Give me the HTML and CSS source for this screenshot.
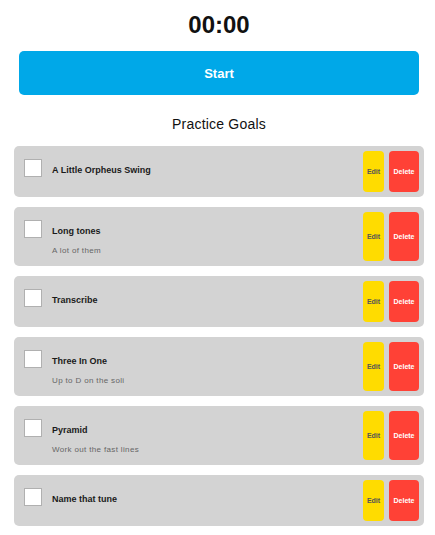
FILE: index.html
```html
<!DOCTYPE html>
<html>
<head>
<meta charset="utf-8">
<link rel="stylesheet" href="styles.css">
</head>
<body>
<main class="app">
  <h1 class="timer">00:00</h1>
  <button class="start">Start</button>
  <h2 class="section-title">Practice Goals</h2>
  <ul class="goals">
    <li class="goal">
      <div class="goal-main">
        <span class="check"></span>
        <div class="goal-text"><div class="goal-title">A Little Orpheus Swing</div></div>
      </div>
      <div class="actions"><span class="btn edit">Edit</span><span class="btn delete">Delete</span></div>
    </li>
    <li class="goal">
      <div class="goal-main">
        <span class="check"></span>
        <div class="goal-text"><div class="goal-title">Long tones</div><div class="goal-desc">A lot of them</div></div>
      </div>
      <div class="actions"><span class="btn edit">Edit</span><span class="btn delete">Delete</span></div>
    </li>
    <li class="goal">
      <div class="goal-main">
        <span class="check"></span>
        <div class="goal-text"><div class="goal-title">Transcribe</div></div>
      </div>
      <div class="actions"><span class="btn edit">Edit</span><span class="btn delete">Delete</span></div>
    </li>
    <li class="goal">
      <div class="goal-main">
        <span class="check"></span>
        <div class="goal-text"><div class="goal-title">Three In One</div><div class="goal-desc">Up to D on the soli</div></div>
      </div>
      <div class="actions"><span class="btn edit">Edit</span><span class="btn delete">Delete</span></div>
    </li>
    <li class="goal">
      <div class="goal-main">
        <span class="check"></span>
        <div class="goal-text"><div class="goal-title">Pyramid</div><div class="goal-desc">Work out the fast lines</div></div>
      </div>
      <div class="actions"><span class="btn edit">Edit</span><span class="btn delete">Delete</span></div>
    </li>
    <li class="goal">
      <div class="goal-main">
        <span class="check"></span>
        <div class="goal-text"><div class="goal-title">Name that tune</div></div>
      </div>
      <div class="actions"><span class="btn edit">Edit</span><span class="btn delete">Delete</span></div>
    </li>
  </ul>
</main>
</body>
</html>
```
FILE: styles.css
```css
* { box-sizing: border-box; }
body {
  margin: 0;
  background: #fff;
  font-family: "Liberation Sans", Arial, sans-serif;
  color: #111;
}
.app {
  width: 410px;
  margin-left: 14px;
  padding-top: 11px;
  display: flex;
  flex-direction: column;
}
.timer {
  margin: 0;
  font-size: 24px;
  line-height: 28px;
  font-weight: bold;
  text-align: center;
}
.start {
  margin: 12px 5px 0;
  height: 44px;
  border: none;
  border-radius: 5px;
  background: #00a8e8;
  color: #fff;
  font-family: "Liberation Sans", Arial, sans-serif;
  font-size: 13px;
  font-weight: bold;
}
.section-title {
  margin: 21px 0 0;
  font-size: 14px;
  line-height: 16px;
  font-weight: normal;
  letter-spacing: 0.2px;
  text-align: center;
}
.goals {
  list-style: none;
  margin: 14px 0 0;
  padding: 0;
  display: flex;
  flex-direction: column;
  gap: 10px;
}
.goal {
  display: flex;
  gap: 5px;
  padding: 5px;
  background: #d3d3d3;
  border-radius: 5px;
}
.goal-main {
  flex: 1;
  display: flex;
  align-items: flex-start;
  gap: 10px;
  padding-left: 5px;
}
.check {
  width: 18px;
  height: 18px;
  margin-top: 8px;
  background: #fff;
  border: 1px solid #b0b0b0;
}
.goal-text {
  padding: 13px 0 4px;
}
.goal-title {
  font-size: 9px;
  line-height: 12px;
  font-weight: bold;
  color: #1a1a1a;
}
.goal-desc {
  margin-top: 8px;
  font-size: 8px;
  line-height: 12px;
  letter-spacing: 0.35px;
  color: #666;
}
.actions {
  display: flex;
  gap: 5px;
  min-height: 41px;
}
.btn {
  display: flex;
  align-items: center;
  justify-content: center;
  border-radius: 4px;
  font-size: 7px;
  font-weight: bold;
}
.edit {
  width: 21px;
  background: #ffdc00;
  color: #555;
}
.delete {
  width: 30px;
  background: #ff4136;
  color: #fff;
}
```
